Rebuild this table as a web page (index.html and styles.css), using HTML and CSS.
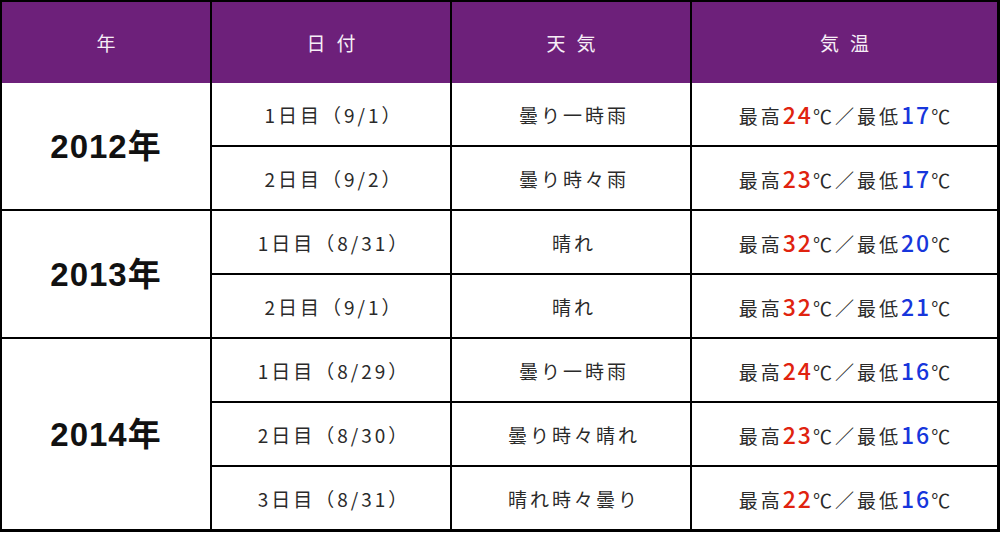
FILE: index.html
```html
<!DOCTYPE html>
<html lang="ja">
<head>
<meta charset="utf-8">
<title>気温表</title>
<link rel="stylesheet" href="styles.css">
</head>
<body>
<table class="weather">
  <colgroup>
    <col class="c-year">
    <col class="c-date">
    <col class="c-sky">
    <col class="c-temp">
  </colgroup>
  <thead>
    <tr>
      <th>年</th>
      <th>日付</th>
      <th>天気</th>
      <th>気温</th>
    </tr>
  </thead>
  <tbody>
    <tr>
      <td class="year" rowspan="2">2012年</td>
      <td>1日目（9/1）</td>
      <td>曇り一時雨</td>
      <td class="temp">最高<span class="hi">24</span>℃／最低<span class="lo">17</span>℃</td>
    </tr>
    <tr>
      <td>2日目（9/2）</td>
      <td>曇り時々雨</td>
      <td class="temp">最高<span class="hi">23</span>℃／最低<span class="lo">17</span>℃</td>
    </tr>
    <tr>
      <td class="year" rowspan="2">2013年</td>
      <td>1日目（8/31）</td>
      <td>晴れ</td>
      <td class="temp">最高<span class="hi">32</span>℃／最低<span class="lo">20</span>℃</td>
    </tr>
    <tr>
      <td>2日目（9/1）</td>
      <td>晴れ</td>
      <td class="temp">最高<span class="hi">32</span>℃／最低<span class="lo">21</span>℃</td>
    </tr>
    <tr>
      <td class="year" rowspan="3">2014年</td>
      <td>1日目（8/29）</td>
      <td>曇り一時雨</td>
      <td class="temp">最高<span class="hi">24</span>℃／最低<span class="lo">16</span>℃</td>
    </tr>
    <tr>
      <td>2日目（8/30）</td>
      <td>曇り時々晴れ</td>
      <td class="temp">最高<span class="hi">23</span>℃／最低<span class="lo">16</span>℃</td>
    </tr>
    <tr>
      <td>3日目（8/31）</td>
      <td>晴れ時々曇り</td>
      <td class="temp">最高<span class="hi">22</span>℃／最低<span class="lo">16</span>℃</td>
    </tr>
  </tbody>
</table>
</body>
</html>
```
FILE: styles.css
```css
html, body {
  margin: 0;
  padding: 0;
  background: #ffffff;
}

body {
  font-family: "Noto Sans CJK JP", "Noto Sans", sans-serif;
  color: #2a2a2a;
}

.weather {
  width: 1000px;
  table-layout: fixed;
  border-collapse: separate;
  border-spacing: 0;
  border-top: 2px solid #000;
  border-left: 2px solid #000;
  border-right: 1px solid #000;
  border-bottom: 1px solid #000;
}

.c-year { width: 210px; }
.c-date { width: 240px; }
.c-sky  { width: 240px; }
.c-temp { width: 307px; }

.weather th,
.weather td {
  padding: 0;
  text-align: center;
  vertical-align: middle;
  border-right: 2px solid #000;
  border-bottom: 2px solid #000;
}

.weather th {
  height: 81px;
  border-bottom: 0;
  background: #6d207a;
  color: #f6eef6;
  font-weight: 400;
  font-size: 19px;
  letter-spacing: 11px;
  text-indent: 11px;
}

.weather td {
  height: 62px;
  font-size: 19px;
  letter-spacing: 3px;
  text-indent: 6px;
  line-height: 1;
}

.weather td.temp {
  letter-spacing: 3px;
  text-indent: 3px;
}

.weather td.year {
  font-family: "Liberation Sans", "Noto Sans CJK JP", sans-serif;
  font-size: 33px;
  font-weight: 700;
  color: #111111;
  letter-spacing: 1px;
  text-indent: 0;
}

.hi,
.lo {
  font-size: 23px;
  font-weight: 500;
  letter-spacing: 2px;
}

.hi { color: #e0230f; }
.lo { color: #1736dc; }
```
